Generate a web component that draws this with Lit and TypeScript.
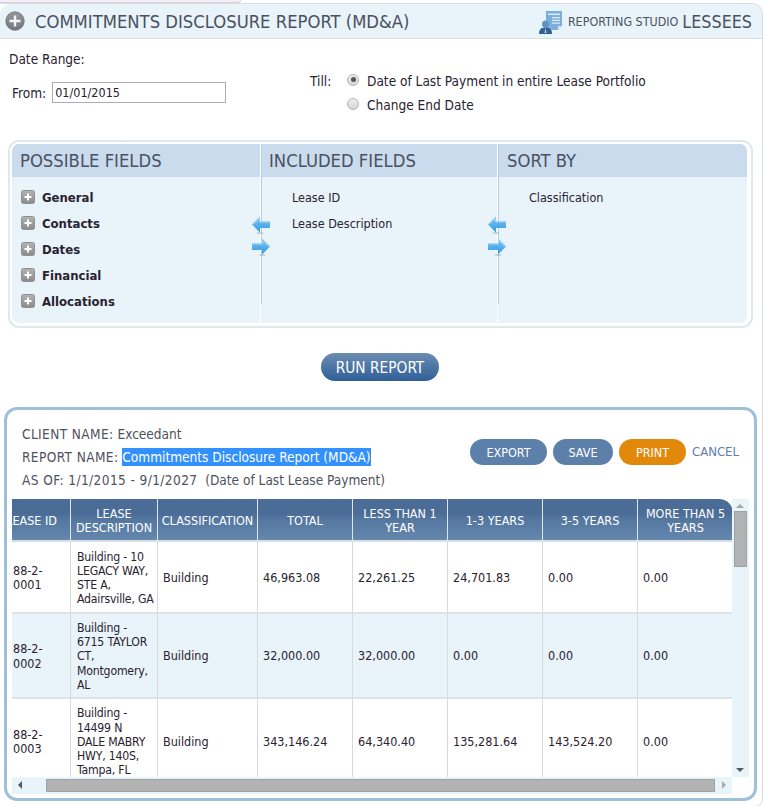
import { LitElement, html, css, svg } from "lit";
import { customElement } from "lit/decorators.js";

const plusCircle = html`<svg class="pc" width="20" height="20" viewBox="0 0 20 20"><defs><linearGradient id="pcg" x1="0" y1="0" x2="0" y2="1"><stop offset="0" stop-color="#969a9e"/><stop offset="1" stop-color="#74787c"/></linearGradient></defs><circle cx="10" cy="10" r="9.2" fill="url(#pcg)" stroke="#65696d" stroke-width=".8"/><path d="M10 4.500v11M4.500 10h11" stroke="#f2f4f5" stroke-width="2.4"/></svg>`;

const reportIcon = html`<svg class="ri" width="24" height="24" viewBox="0 0 24 24"><path d="M8 1h16v15l-4 4H8z" fill="#7dafdc"/><path d="M20 20l4-4h-4z" fill="#d5e6f5"/><path d="M10 3.500h12V5H10zM14 7h8v1.200h-8zM14 9.800h8V11h-8zM14 12.500h8v1.200h-8z" fill="#dcebf7"/><circle cx="7.500" cy="14" r="3.500" fill="#5f93c6"/><path d="M1 24c0-4.500 2-6.500 6.500-6.500S14 19.500 14 24z" fill="#2f6194"/><path d="M7.500 18l-1 5h2z" fill="#bcd6ec"/></svg>`;

const plusBox = html`<svg class="pb" width="14" height="14" viewBox="0 0 14 14"><defs><linearGradient id="pbg" x1="0" y1="0" x2="0" y2="1"><stop offset="0" stop-color="#b4b4b4"/><stop offset="1" stop-color="#8a8a8a"/></linearGradient></defs><rect x=".5" y=".5" width="13" height="13" rx="2" fill="url(#pbg)" stroke="#909090"/><path d="M7 3.500v7M3.500 7h7" stroke="#fff" stroke-width="2"/></svg>`;

const arrowShape = svg`<ellipse cx="8" cy="17" rx="3.500" ry=".8" fill="#8f8f8f" opacity=".5"/><path d="M0 8.500L8 .5v5h10v6.500H8V16.500z" fill="url(#arg)"/><path d="M1.500 8.500L7.500 2.500v3.500h10" fill="none" stroke="#a9d9f7" stroke-width=".8"/><path d="M9 9.500h4" stroke="#5a9ad0" stroke-width=".8"/>`;
const arrow = (right: boolean, cls: string) => html`<svg class="arrow ${cls}" width="18" height="18" viewBox="0 0 18 18"><defs><linearGradient id="arg" x1="0" y1="0" x2="0" y2="1"><stop offset="0" stop-color="#86c4ef"/><stop offset="1" stop-color="#2a9ce9"/></linearGradient></defs><g transform="${right ? "translate(18 0) scale(-1 1)" : ""}">${arrowShape}</g></svg>`;

const rows = [
  { cls: "r1", id: ["88-2-", "0001"], desc: ["Building - 10", "LEGACY WAY,", "STE A,", "Adairsville, GA"], vals: ["46,963.08", "22,261.25", "24,701.83", "0.00", "0.00"] },
  { cls: "r2", id: ["88-2-", "0002"], desc: ["Building -", "6715 TAYLOR", "CT,", "Montgomery,", "AL"], vals: ["32,000.00", "32,000.00", "0.00", "0.00", "0.00"] },
  { cls: "r3", id: ["88-2-", "0003"], desc: ["Building -", "14499 N", "DALE MABRY", "HWY, 140S,", "Tampa, FL"], vals: ["343,146.24", "64,340.40", "135,281.64", "143,524.20", "0.00"] },
];

const lines = (l: string[]) => l.map((t, i) => html`${i ? html`<br />` : ""}${t}`);

@customElement("app-root")
export class AppRoot extends LitElement {
  static styles = css`
    :host {
      display: block;
      width: 765px;
      height: 806px;
      overflow: hidden;
      background: #fff;
      color: #2a2230;
      font-family: "DejaVu Sans", Verdana, sans-serif;
      font-stretch: condensed;
      font-size: 12px;
    }
    * { box-sizing: border-box; }
    .sliver {
      width: 241px;
      height: 3px;
      background: #f4eff6;
      border-bottom: 1px solid #dccfe0;
      border-right: 1px solid #dccfe0;
      border-radius: 0 0 6px 0;
    }
    .panel {
      width: 763px;
      height: 804px;
      border: 1px solid #d9dee4;
      border-left: none;
      border-radius: 0 11px 8px 0;
    }
    .head {
      height: 35px;
      background: #e8f3fa;
      border-bottom: 1px solid #d6dde3;
      border-radius: 10px 10px 0 0;
      display: flex;
      align-items: center;
      padding: 0 10px 0 5px;
      color: #4a5160;
    }
    .pc { margin-right: 10px; flex: none; }
    .title { font-size: 18.300px; flex: 1; white-space: nowrap; }
    .ri { margin-right: 6px; margin-top: 1px; }
    .studio { font-size: 12.400px; margin-right: 4px; white-space: nowrap; }
    .who { font-size: 17.800px; white-space: nowrap; }
    .dates {
      height: 101px;
      padding: 11px 0 0 9px;
      display: flex;
      font-size: 13.550px;
    }
    .left { width: 301px; }
    .dr { line-height: 18px; margin-bottom: 14px; }
    .from { display: flex; align-items: center; padding-left: 3px; gap: 6px; height: 21px; }
    .from input {
      width: 174px;
      height: 21px;
      border: 1px solid #a9aeb2;
      padding: 1px 2px;
      font: inherit;
      font-size: 12.500px;
      font-stretch: condensed;
      color: #2a2230;
      outline: none;
      background: #fff;
    }
    .till { display: flex; padding-top: 22px; }
    .till-l { width: 37px; line-height: 18px; }
    .opts { display: flex; flex-direction: column; gap: 6px; }
    .opt { display: flex; align-items: center; gap: 8px; height: 18px; white-space: nowrap; }
    .opt input {
      appearance: none;
      width: 12px; height: 12px; margin: -3px 0 0 0; border-radius: 50%;
      border: 1px solid #b3b3b3;
      background: linear-gradient(#eee, #d6d6d6);
      position: relative;
    }
    .opt input:checked::after {
      content: ""; position: absolute; left: 2.500px; top: 2.500px; width: 5px; height: 5px; border-radius: 50%; background: #555;
    }
    .fields {
      margin: 0 0 0 8px;
      width: 745px;
      height: 188px;
      border: 2px solid #dfe9ec;
      border-radius: 11px;
      padding: 2px 4px 3px 2px;
    }
    .grid {
      display: grid;
      grid-template-columns: 248px 237px 250px;
      height: 179px;
      background: #e8f3fa;
      border-radius: 7px;
      overflow: hidden;
    }
    .col { position: relative; }
    .col + .col { border-left: 1px solid #fff; }
    .col + .col::before {
      content: ""; position: absolute; left: 0; top: 0; width: 1px; height: 160px; background: #aed0ea;
    }
    .ch {
      height: 33px;
      background: #c9dbed;
      color: #4a5160;
      font-size: 18.300px;
      line-height: 34px;
      padding-left: 8px;
      white-space: nowrap;
    }
    .c3 .ch { padding-left: 9px; }
    .tree { padding: 7px 0 0 9px; }
    .tree div { display: flex; align-items: center; gap: 7px; height: 26px; font-weight: 700; font-size: 13px; }
    .list { padding: 8px 0 0 31px; }
    .list div { height: 26px; line-height: 26px; font-size: 12.500px; }
    .arrow { position: absolute; left: -9px; z-index: 1; }
    .c3 .arrow { left: -10px; }
    .arrow.l { top: 72px; }
    .arrow.rt { top: 94px; }
    .runwrap { display: flex; justify-content: center; padding: 25px 0 26px 0; width: 760px; }
    .run {
      width: 118px; height: 28px;
      border: none;
      border-radius: 14px;
      padding: 2px 0 0 0;
      background: linear-gradient(#6b8cb1, #2f5f98);
      color: #fff;
      font: inherit;
      font-stretch: condensed;
      font-size: 15.300px;
    }
    .report {
      margin-left: 4px;
      width: 753px;
      height: 394px;
      border: 3px solid #9fc0d9;
      border-radius: 13px;
      padding: 13px 5px 0 5px;
      display: flex;
      flex-direction: column;
      color: #50525c;
    }
    .rtop { display: flex; height: 76px; font-size: 13.550px; }
    .info { padding-left: 10px; flex: 1; }
    .info div { height: 23px; line-height: 23px; white-space: nowrap; }
    .lab { letter-spacing: .4px; }
    .sel { background: #3390ff; color: #fff; padding: 1px 0; }
    .actions { display: flex; align-items: flex-start; gap: 6px; padding: 16px 10px 0 0; }
    .btn {
      height: 26px; border: none; border-radius: 13px;
      background: #5d80ab; color: #fff; font: inherit; font-stretch: condensed; font-size: 12.500px; padding: 0;
    }
    .b1 { width: 77px; } .b2 { width: 60px; }
    .b3 { width: 67px; background: #e2890c; }
    .cancel { line-height: 26px; color: #5d7ea6; font-size: 13px; }
    .tablearea {
      display: grid;
      grid-template-columns: 720px 17px;
      grid-template-rows: 278px 17px;
    }
    .tv { overflow: hidden; }
    table {
      border-collapse: separate;
      border-spacing: 0;
      table-layout: fixed;
      width: 731px;
      margin-left: -10px;
      font-size: 12.500px;
      color: #2a2230;
    }
    th {
      height: 43px;
      padding: 2px 2px 0;
      font-weight: 400;
      color: #fff;
      font-size: 12.500px;
      line-height: 14px;
      border-right: 1px solid #dfe6ee;
      border-bottom: 2px solid #d5dde6;
      background: linear-gradient(#4a6c97 0, #4a6c97 35%, #54779f 50%, #6587ae 100%);
      text-align: center;
    }
    th:first-child { white-space: nowrap; padding: 2px 13px 0 0; text-align: right; }
    th:nth-child(8) { border-right: none; border-top-right-radius: 14px; }
    td {
      padding: 2px 0 0 5px;
      line-height: 14.200px;
      border-right: 1px solid #d9d9d9;
      border-bottom: 2px solid #dfe3e6;
      vertical-align: middle;
      white-space: nowrap;
    }
    td:first-child { padding-left: 11px; }
    td:nth-child(2) { padding-left: 6px; font-size: 12.200px; letter-spacing: -.2px; }
    td:last-child { border-right: none; }
    .r1 td { height: 72px; background: #fff; }
    .r2 td { height: 85px; background: #e8f3fa; }
    .r3 td { height: 86px; background: #fff; }
    .vbar, .hbar { background: #e8f3fa; position: relative; }
    .corner { background: #fff; }
    .thumb { background: #b3b3b3; border: 1px solid #9aa2a6; position: absolute; }
    .vbar .thumb { left: 2px; top: 12px; width: 13px; height: 56px; }
    .hbar .thumb { left: 34px; top: 2px; width: 669px; height: 13px; }
    .tri { position: absolute; width: 0; height: 0; border-style: solid; border-color: transparent; }
    .up { left: 4px; top: 5px; border-width: 0 4px 4px 4px; border-bottom-color: #a8a8a8; }
    .down { left: 4px; bottom: 5px; border-width: 4px 4px 0 4px; border-top-color: #505860; }
    .lf { left: 6px; top: 4px; border-width: 4px 4px 4px 0; border-right-color: #505860; }
    .rg { right: 6px; top: 4px; border-width: 4px 0 4px 4px; border-left-color: #a8a8a8; }
  `;

  render() {
    return html`
      <div class="sliver"></div>
      <div class="panel">
        <div class="head">
          ${plusCircle}
          <span class="title">COMMITMENTS DISCLOSURE REPORT (MD&amp;A)</span>
          ${reportIcon}
          <span class="studio">REPORTING STUDIO</span>
          <span class="who">LESSEES</span>
        </div>
        <div class="dates">
          <div class="left">
            <div class="dr">Date Range:</div>
            <div class="from">From: <input type="text" .value=${"01/01/2015"} /></div>
          </div>
          <div class="till">
            <div class="till-l">Till:</div>
            <div class="opts">
              <label class="opt"><input type="radio" name="t" checked />Date of Last Payment in entire Lease Portfolio</label>
              <label class="opt"><input type="radio" name="t" />Change End Date</label>
            </div>
          </div>
        </div>
        <div class="fields">
          <div class="grid">
            <div class="col">
              <div class="ch">POSSIBLE FIELDS</div>
              <div class="tree">
                ${["General", "Contacts", "Dates", "Financial", "Allocations"].map((t) => html`<div>${plusBox}${t}</div>`)}
              </div>
            </div>
            <div class="col">
              ${arrow(false, "l")}${arrow(true, "rt")}
              <div class="ch">INCLUDED FIELDS</div>
              <div class="list"><div>Lease ID</div><div>Lease Description</div></div>
            </div>
            <div class="col c3">
              ${arrow(false, "l")}${arrow(true, "rt")}
              <div class="ch">SORT BY</div>
              <div class="list"><div>Classification</div></div>
            </div>
          </div>
        </div>
        <div class="runwrap"><button class="run">RUN REPORT</button></div>
        <div class="report">
          <div class="rtop">
            <div class="info">
              <div><span class="lab">CLIENT NAME:</span> Exceedant</div>
              <div><span class="lab">REPORT NAME:</span> <span class="sel">Commitments Disclosure Report (MD&amp;A)</span></div>
              <div><span class="lab">AS OF: 1/1/2015 - 9/1/2027</span>&nbsp; (Date of Last Lease Payment)</div>
            </div>
            <div class="actions">
              <button class="btn b1">EXPORT</button>
              <button class="btn b2">SAVE</button>
              <button class="btn b3">PRINT</button>
              <span class="cancel">CANCEL</span>
            </div>
          </div>
          <div class="tablearea">
            <div class="tv">
              <table>
                <colgroup>
                  <col style="width:69px" /><col style="width:87px" /><col style="width:100px" />
                  <col style="width:95px" /><col style="width:95px" /><col style="width:95px" /><col style="width:95px" /><col style="width:95px" />
                </colgroup>
                <thead>
                  <tr>
                    <th>LEASE ID</th><th>LEASE DESCRIPTION</th><th>CLASSIFICATION</th><th>TOTAL</th>
                    <th>LESS THAN 1 YEAR</th><th>1-3 YEARS</th><th>3-5 YEARS</th><th>MORE THAN 5 YEARS</th>
                  </tr>
                </thead>
                <tbody>
                  ${rows.map((r) => html`<tr class=${r.cls}>
                    <td>${lines(r.id)}</td><td>${lines(r.desc)}</td><td>Building</td>
                    ${r.vals.map((v) => html`<td>${v}</td>`)}
                  </tr>`)}
                </tbody>
              </table>
            </div>
            <div class="vbar"><span class="tri up"></span><div class="thumb"></div><span class="tri down"></span></div>
            <div class="hbar"><span class="tri lf"></span><div class="thumb"></div><span class="tri rg"></span></div>
            <div class="corner"></div>
          </div>
        </div>
      </div>
    `;
  }
}
